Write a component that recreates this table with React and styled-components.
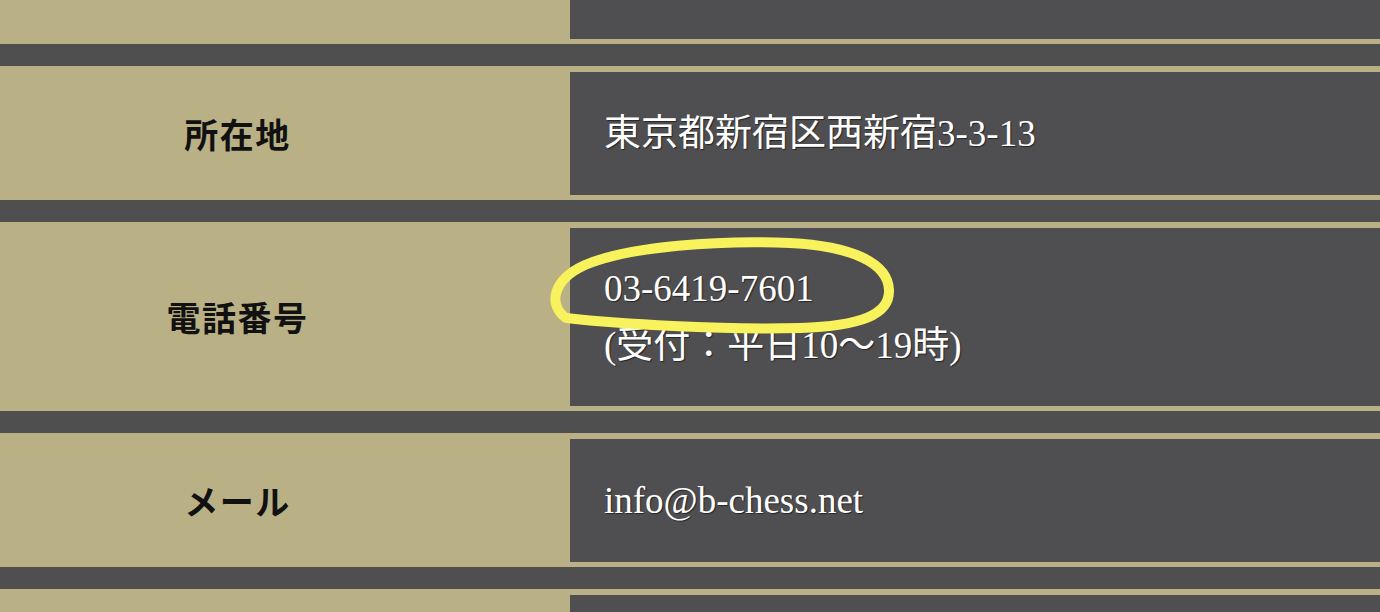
import styled, { createGlobalStyle } from "styled-components";

const GlobalStyle = createGlobalStyle`
  html, body {
    margin: 0;
    padding: 0;
    background: #4f4f4f;
    overflow: hidden;
  }
`;

const Page = styled.div`
  width: 1380px;
  height: 612px;
  overflow: hidden;
  background: #4f4f4f;
`;

const Table = styled.div`
  display: flex;
  flex-direction: column;
  gap: 22px;
  margin-top: -6px;
`;

const Row = styled.div`
  display: flex;
  background: #b9b086;
  min-height: ${(p) => (p.$short ? "50px" : "auto")};
`;

const Label = styled.div`
  width: 570px;
  flex-shrink: 0;
  box-sizing: border-box;
  padding-right: 95px;
  display: flex;
  align-items: center;
  justify-content: center;
  font-family: "Noto Sans CJK JP", sans-serif;
  font-weight: 700;
  font-size: 34px;
  letter-spacing: 1.5px;
  color: #111;
`;

const Value = styled.div`
  position: relative;
  flex: 1;
  margin: 6px 0 5px;
  min-height: ${(p) => (p.$short ? "39px" : "123px")};
  box-sizing: border-box;
  padding: ${(p) => (p.$short ? "0" : "32px 34px")};
  background: #4f4e51;
  display: flex;
  flex-direction: column;
  justify-content: center;
  font-family: "Liberation Serif", "Noto Sans CJK JP", serif;
  font-size: 37px;
  line-height: 57px;
  color: #fff;
  text-shadow: 1px 1px 1px rgba(0, 0, 0, 0.55);
`;

const Mark = styled.svg`
  position: absolute;
  left: -30px;
  top: 2px;
  overflow: visible;
  pointer-events: none;
`;

const Circle = () => (
  <Mark width="370" height="110" viewBox="0 0 370 110">
    <path
      d="M 26 88 C 8 75, 12 50, 45 35 C 90 16, 180 10, 250 13 C 310 16, 348 32, 349 60 C 350 85, 320 96, 260 98 C 180 100, 80 94, 26 88 Z"
      fill="none"
      stroke="#f8f25c"
      strokeWidth="10"
      strokeLinecap="round"
      strokeLinejoin="round"
    />
  </Mark>
);

const rows = [
  { label: "所在地", lines: ["東京都新宿区西新宿3-3-13"] },
  { label: "電話番号", lines: ["03-6419-7601", "(受付：平日10〜19時)"], mark: true },
  { label: "メール", lines: ["info@b-chess.net"] },
];

export default function App() {
  return (
    <Page>
      <GlobalStyle />
      <Table>
        <Row $short>
          <Label />
          <Value $short />
        </Row>
        {rows.map((r) => (
          <Row key={r.label}>
            <Label>{r.label}</Label>
            <Value>
              {r.mark && <Circle />}
              {r.lines.map((l) => (
                <div key={l}>{l}</div>
              ))}
            </Value>
          </Row>
        ))}
        <Row>
          <Label />
          <Value />
        </Row>
      </Table>
    </Page>
  );
}
